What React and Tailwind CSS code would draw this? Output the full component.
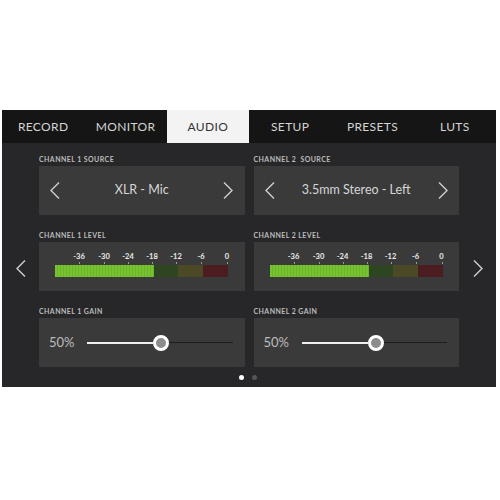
import { useState } from "react";

const TABS = ["RECORD", "MONITOR", "AUDIO", "SETUP", "PRESETS", "LUTS"];
const SCALE = [
  { label: "-36", x: 24 },
  { label: "-30", x: 49 },
  { label: "-24", x: 73 },
  { label: "-18", x: 97 },
  { label: "-12", x: 121 },
  { label: "-6", x: 146 },
  { label: "0", x: 172 },
];

function Chevron({ dir = "left", className = "" }) {
  return (
    <svg width="10" height="17" viewBox="0 0 10 17" className={className}>
      <polyline
        points={dir === "left" ? "9,0.5 1,8.5 9,16.5" : "1,0.5 9,8.5 1,16.5"}
        fill="none"
        stroke="currentColor"
        strokeWidth="1.4"
      />
    </svg>
  );
}

function Label({ children }) {
  return (
    <p className="h-[8px] mb-[3px] text-[7px] leading-[8px] font-bold tracking-[0.06em] text-[#bcbcbc] whitespace-pre">
      {children}
    </p>
  );
}

function Source({ label, value }) {
  return (
    <div>
      <Label>{label}</Label>
      <div className="h-[49px] bg-[#3a3a3b] flex items-center justify-between px-[11px] text-[#cfcfcf]">
        <Chevron dir="left" />
        <span className="text-[12.5px] text-[#d6d6d6]">{value}</span>
        <Chevron dir="right" />
      </div>
    </div>
  );
}

function Level({ label }) {
  return (
    <div>
      <Label>{label}</Label>
      <div className="h-[49px] bg-[#3a3a3b] px-[16px] pt-[11px]">
        <div className="relative h-[11px] w-[173px]">
          {SCALE.map((s) => (
            <span
              key={s.label}
              className="absolute top-0 -translate-x-1/2 text-[7.5px] leading-[8px] font-bold text-[#ececec]"
              style={{ left: s.x }}
            >
              {s.label}
            </span>
          ))}
          {SCALE.map((s) => (
            <span
              key={"t" + s.label}
              className="absolute top-[9px] w-px h-[2px] bg-[#9a9a9a]"
              style={{ left: s.x }}
            />
          ))}
        </div>
        <div className="mt-[1px] flex h-[12px] w-[173px]">
          <div className="w-[99px] bg-[#76c22f] bg-[repeating-linear-gradient(90deg,rgba(255,255,255,0)_0px,rgba(255,255,255,0)_2px,rgba(0,0,0,0.08)_2px,rgba(0,0,0,0.08)_3px)]" />
          <div className="w-[24px] bg-[#2d4621]" />
          <div className="w-[25px] bg-[#4c4a26]" />
          <div className="w-[25px] bg-[#4b1c20]" />
        </div>
      </div>
    </div>
  );
}

function Gain({ label }) {
  return (
    <div>
      <Label>{label}</Label>
      <div className="h-[49px] bg-[#3a3a3b] flex items-center pl-[10px] pr-[12px]">
        <span className="w-[38px] text-[13px] text-[#bdbdbd]">50%</span>
        <div className="flex-1 flex items-center">
          <div className="w-[66px] h-[2px] bg-[#f0f0f0]" />
          <div className="w-[16px] h-[16px] rounded-full border-[3px] border-white bg-[#8c8c8c] shrink-0" />
          <div className="flex-1 h-px bg-[#1c1c1c]" />
        </div>
      </div>
    </div>
  );
}

export default function App() {
  const [tab, setTab] = useState("AUDIO");

  return (
    <div className="w-[500px] h-[500px] bg-white pt-[110px] pl-[2px] font-['Lato','Liberation_Sans',sans-serif]">
      <div className="w-[494px] h-[277px] bg-[#272729] flex flex-col">
        <div className="h-[33px] bg-[#151515] flex">
          {TABS.map((t) => (
            <button
              key={t}
              onClick={() => setTab(t)}
              className={`flex-1 text-[12px] tracking-[0.03em] ${
                tab === t ? "bg-[#f3f3f3] text-[#333]" : "text-[#d4d4d4]"
              }`}
            >
              {t}
            </button>
          ))}
        </div>

        <div className="flex-1 flex">
          <div className="w-[37px] flex items-center justify-center pt-[7px] text-[#cfcfcf]">
            <Chevron dir="left" />
          </div>

          <div className="flex-1 pt-[12px]">
            <div className="grid grid-cols-2 gap-x-[9px] gap-y-[16px]">
              <Source label="CHANNEL 1 SOURCE" value="XLR - Mic" />
              <Source label="CHANNEL 2  SOURCE" value="3.5mm Stereo - Left" />
              <Level label="CHANNEL 1 LEVEL" />
              <Level label="CHANNEL 2 LEVEL" />
              <Gain label="CHANNEL 1 GAIN" />
              <Gain label="CHANNEL 2 GAIN" />
            </div>
            <div className="flex justify-center gap-[8px] mt-[8px] pr-[2px]">
              <span className="w-[5px] h-[5px] rounded-full bg-white" />
              <span className="w-[5px] h-[5px] rounded-full bg-[#555]" />
            </div>
          </div>

          <div className="w-[37px] flex items-center justify-center pt-[7px] text-[#cfcfcf]">
            <Chevron dir="right" />
          </div>
        </div>
      </div>
    </div>
  );
}
